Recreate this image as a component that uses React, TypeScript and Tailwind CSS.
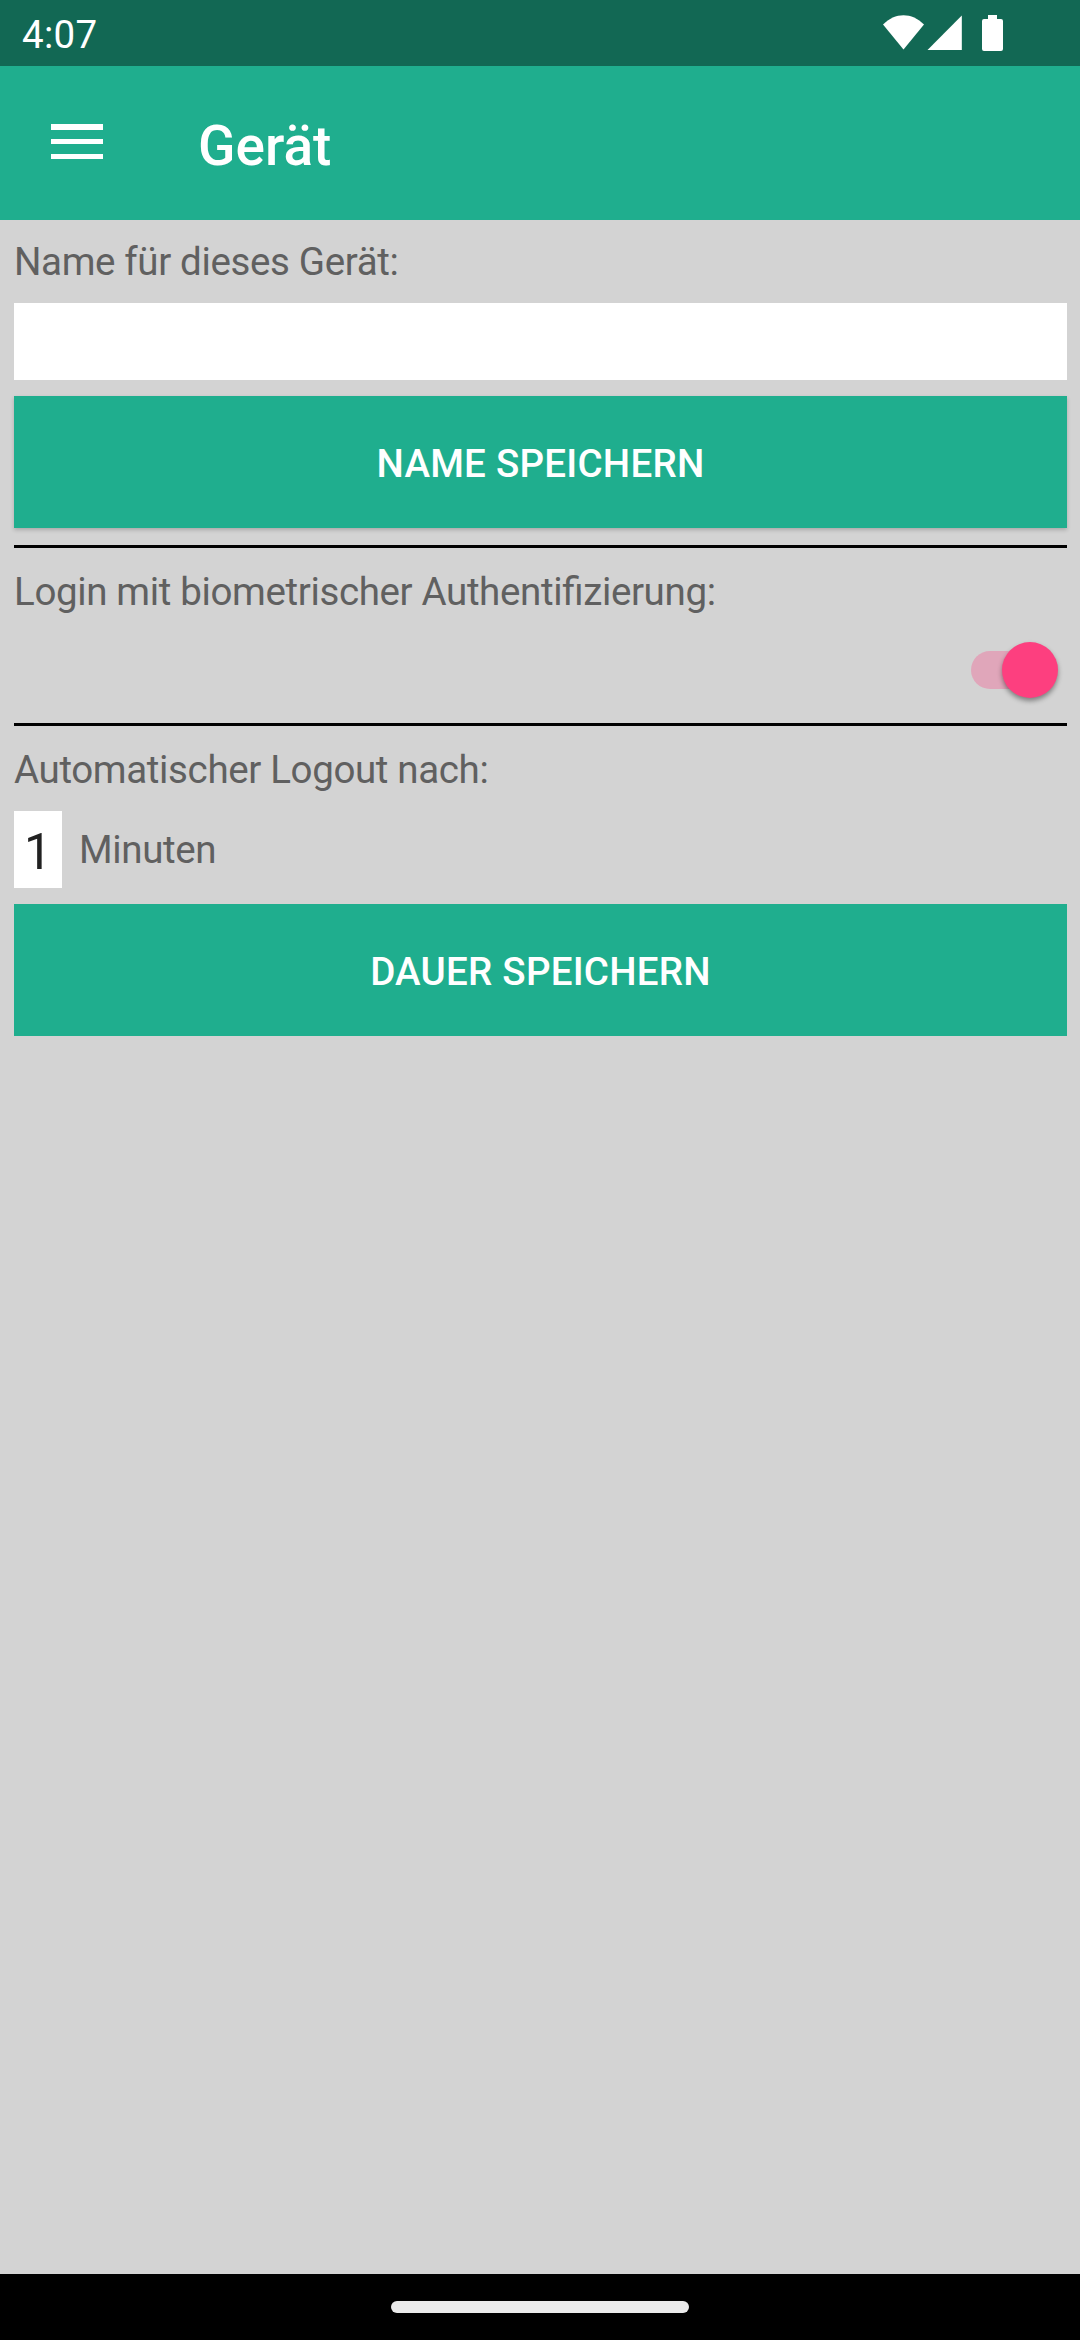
import type { ReactNode } from 'react'

function StatusBar() {
  return (
    <header className="h-[66px] shrink-0 bg-[#126854] flex justify-between pl-[22px] pr-[76px] text-white">
      <span className="pt-[12px] text-[38.5px] leading-[45px] tracking-[0.3px]">4:07</span>
      <svg className="h-[66px] w-[124px]" viewBox="880 0 124 66" fill="currentColor">
        <path d="M883 24.5C895 12 912 12 924 24.5L903.5 49.5Z" />
        <path d="M961.8 15.5V50H927.5Z" />
        <path d="M988 15h9v4h4q2 0 2 2v28q0 2-2 2h-17q-2 0-2-2v-28q0-2 2-2h4z" />
      </svg>
    </header>
  )
}

function AppBar() {
  return (
    <div className="h-[154px] shrink-0 bg-[#1fae8e] flex text-white">
      <button aria-label="Menü" className="ml-[51px] mt-[58px] h-[35px] w-[52px] flex flex-col justify-between">
        <span className="h-[5.5px] w-full bg-white" />
        <span className="h-[5.5px] w-full bg-white" />
        <span className="h-[5.5px] w-full bg-white" />
      </button>
      <h1 className="ml-[95px] mt-[48px] text-[55px] leading-[64px] font-medium">Gerät</h1>
    </div>
  )
}

function Label({ children }: { children: ReactNode }) {
  return (
    <p className="text-[38.5px] leading-[45px] tracking-[-0.36px] text-[#606060] [font-feature-settings:'liga']">
      {children}
    </p>
  )
}

function Divider() {
  return <hr className="h-[3px] border-0 bg-black" />
}

export default function App() {
  return (
    <div className="w-[1080px] h-[2340px] flex flex-col bg-[#d3d3d3] font-['Roboto',sans-serif] overflow-hidden">
      <StatusBar />
      <AppBar />

      <main className="flex-1 pl-[14px] pr-[13px] flex flex-col">
        <div className="pt-[19px] pb-[17px] flex flex-col">
          <Label>Name für dieses Gerät:</Label>
          <div className="mt-[19px] h-[77px] bg-white" />
          <button className="mt-[16px] h-[132px] pt-[3px] bg-[#1fae8e] text-white text-[38.5px] leading-[45px] tracking-[0.25px] font-medium shadow-[0_2px_4px_rgba(0,0,0,0.2)]">
            NAME SPEICHERN
          </button>
        </div>
        <Divider />

        <div className="h-[175px] pt-[21px] flex flex-col">
          <Label>Login mit biometrischer Authentifizierung:</Label>
          <div className="mt-[28px] mr-[9px] self-end relative w-[87px] h-[56px] flex items-center">
            <div className="h-[38px] w-[78px] rounded-full bg-[#e0a6ba]" />
            <div className="absolute right-0 top-0 size-[56px] rounded-full bg-[#fd3f7f] shadow-[0_3px_5px_rgba(0,0,0,0.4)]" />
          </div>
        </div>
        <Divider />

        <div className="pt-[21px] flex flex-col">
          <Label>Automatischer Logout nach:</Label>
          <div className="mt-[19px] h-[77px] flex gap-[17px]">
            <div className="w-[48px] bg-white pt-[12px] text-center text-[49.5px] leading-[58px] text-[#212121]">1</div>
            <div className="pt-[16px]">
              <Label>Minuten</Label>
            </div>
          </div>
          <button className="mt-[16px] h-[132px] pt-[3px] bg-[#1fae8e] text-white text-[38.5px] leading-[45px] tracking-[0.25px] font-medium">
            DAUER SPEICHERN
          </button>
        </div>
      </main>

      <footer className="h-[66px] shrink-0 bg-black flex items-center justify-center">
        <div className="h-[12px] w-[298px] rounded-full bg-[#ebebeb]" />
      </footer>
    </div>
  )
}
